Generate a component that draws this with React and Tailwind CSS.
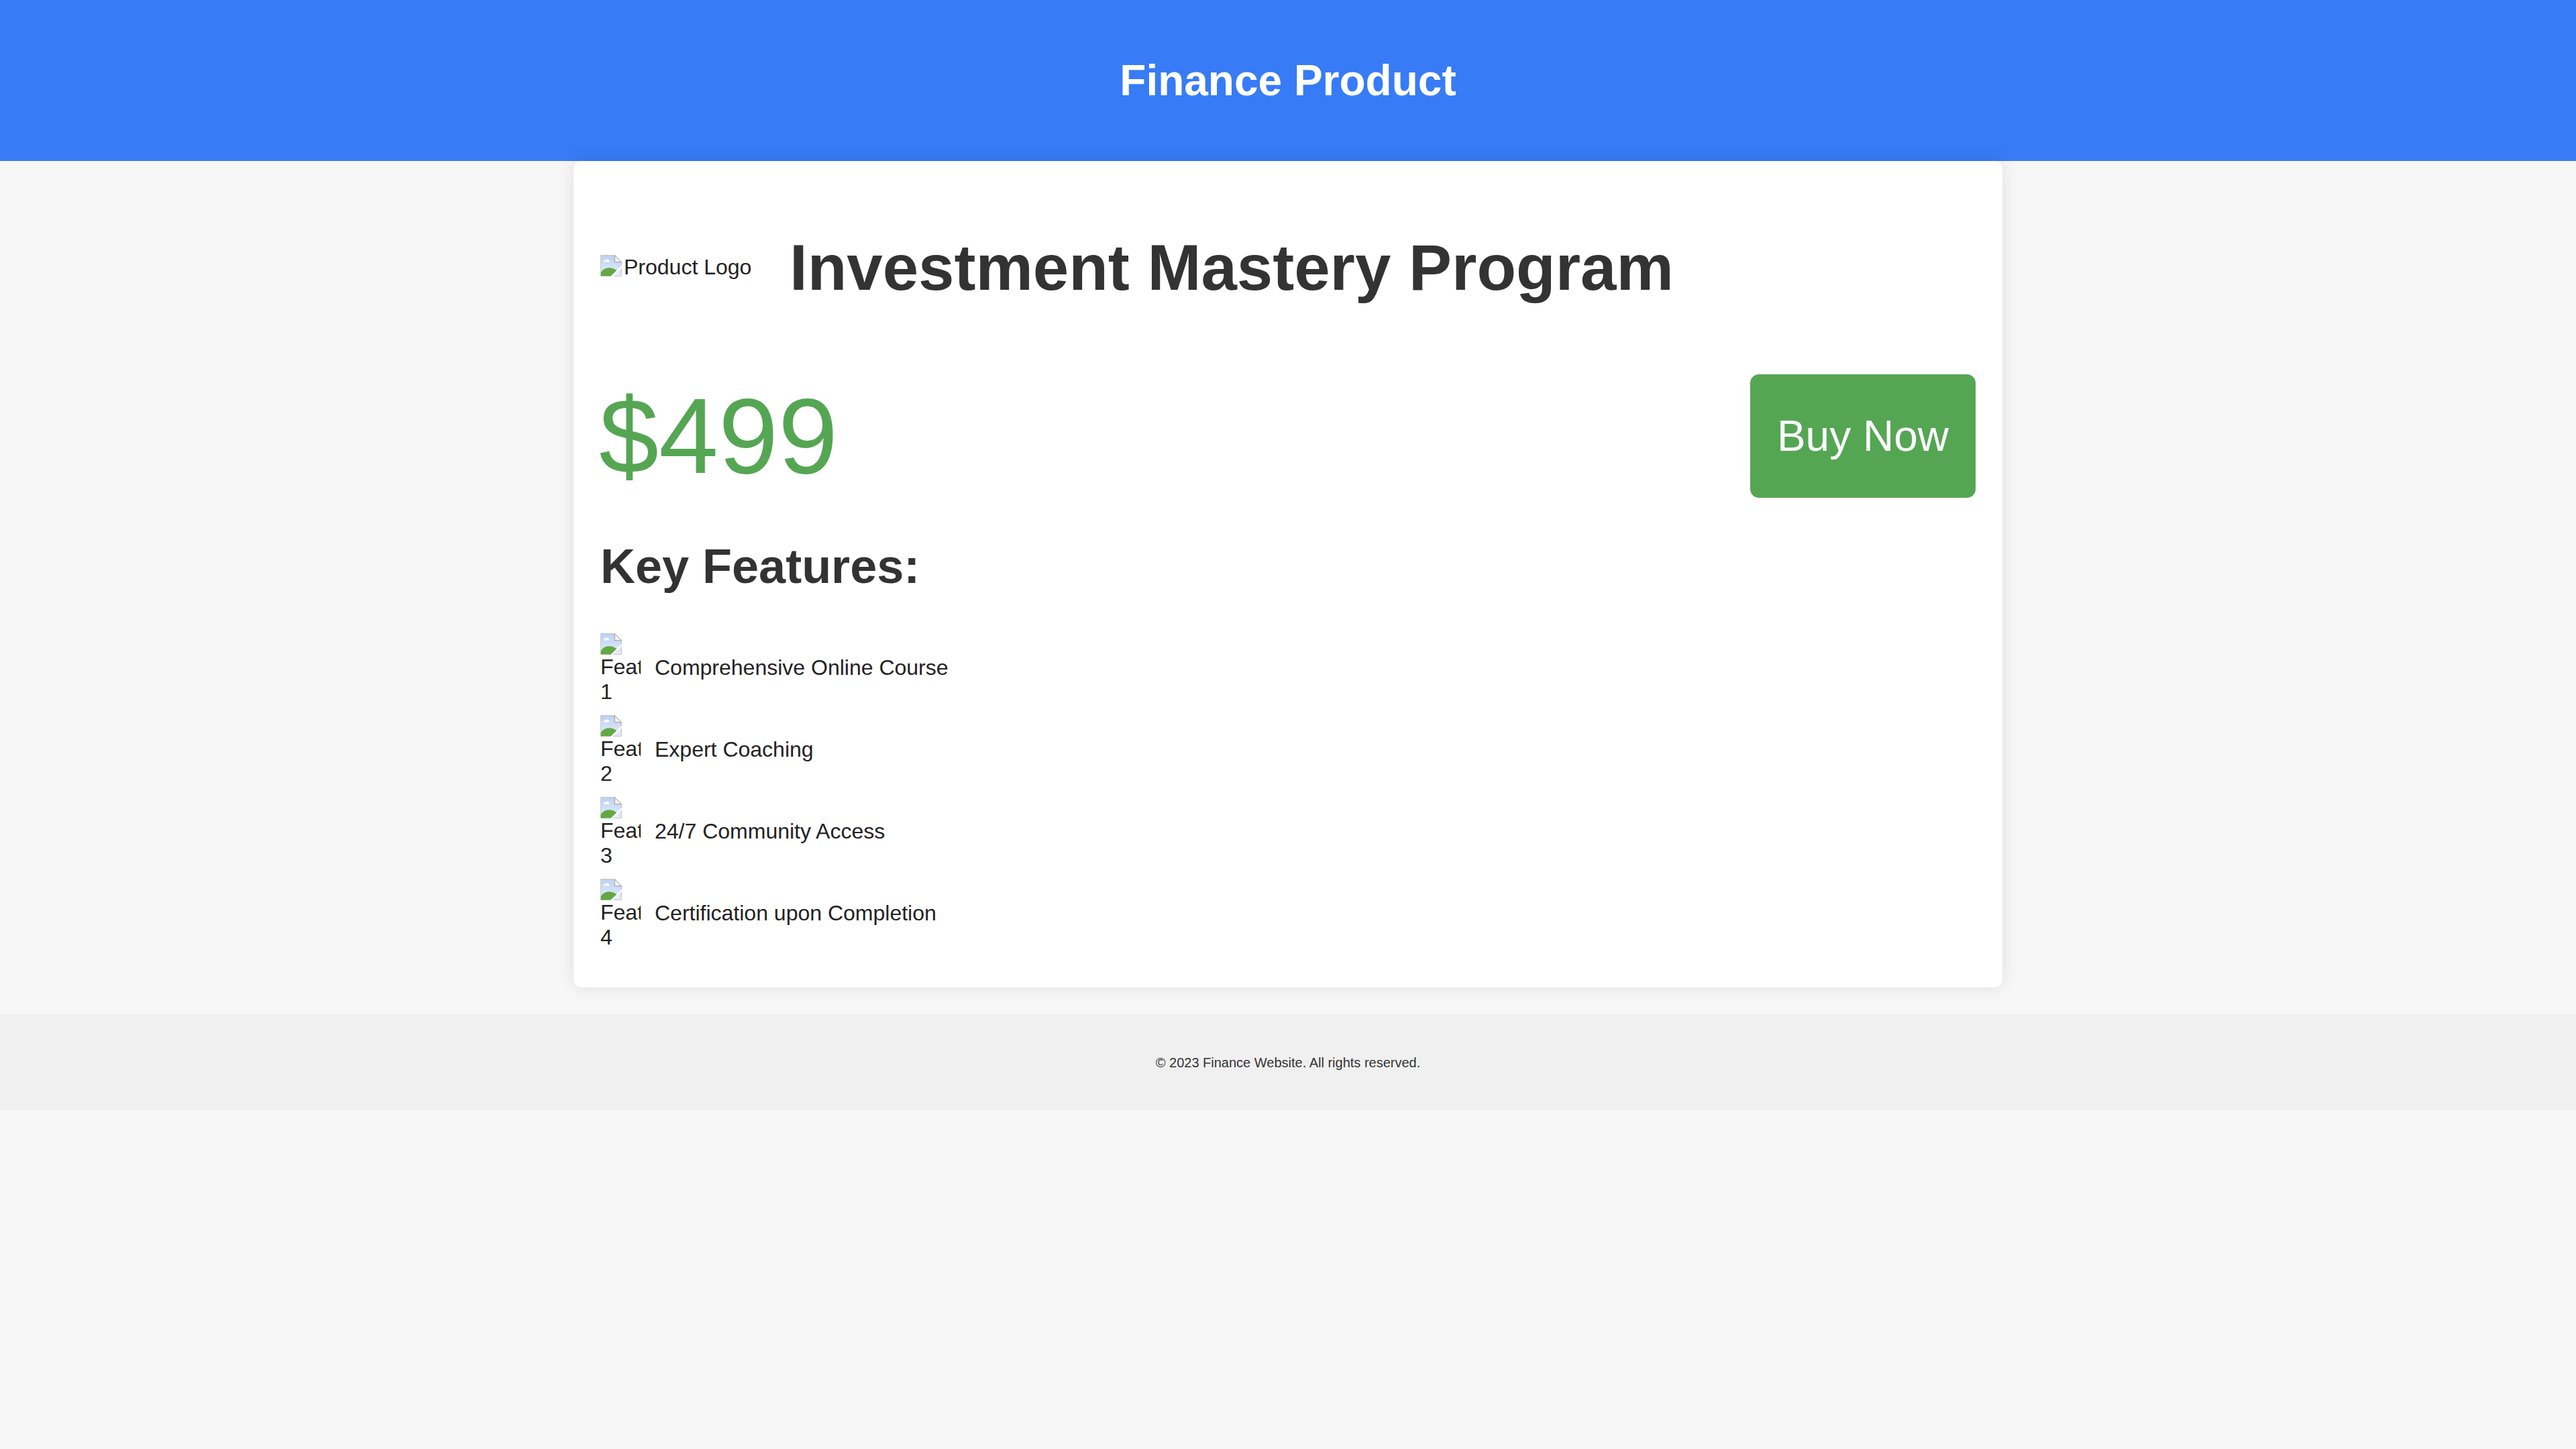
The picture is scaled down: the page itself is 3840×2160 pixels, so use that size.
import React from "react";

const BrokenImage = () => (
  <svg width="32" height="32" viewBox="0 0 16 16" className="block shrink-0">
    <defs>
      <linearGradient id="sky" x1="0" y1="0" x2="0" y2="1">
        <stop offset="0" stopColor="#bcd1f3" />
        <stop offset="1" stopColor="#e6eefb" />
      </linearGradient>
    </defs>
    <path d="M0.3 0.3H10.6L15.7 5.4V15.7H0.3Z" fill="url(#sky)" stroke="#b8b8b8" strokeWidth="0.4" />
    <path d="M10.6 0.3V5.4H15.7Z" fill="#f4f4f4" stroke="#9a9a9a" strokeWidth="0.5" />
    <path d="M2.4 5.2C2.4 4.2 3.2 3.6 4 3.8C4.3 3 5.6 3 5.9 3.9C6.7 3.9 7 4.8 6.5 5.3Z" fill="#fff" />
    <path d="M0.3 15.7V13.2C1.6 10.6 4.4 9.4 7.2 9.6C9.4 9.8 11.2 10.8 12.4 11.8L8.4 15.7Z" fill="#64a844" />
    <path d="M8.2 16.2L16.2 8.6" stroke="#fff" strokeWidth="1.3" />
  </svg>
);

const features = [
  "Comprehensive Online Course",
  "Expert Coaching",
  "24/7 Community Access",
  "Certification upon Completion",
];

export default function App() {
  return (
    <div className="min-h-screen bg-[#f7f7f7] font-['Liberation_Sans',Arial,sans-serif] text-[#333]">
      <header className="h-[240px] bg-[#377bf6] flex items-center justify-center">
        <h1 className="text-[64px] font-bold text-white leading-none">Finance Product</h1>
      </header>

      <main className="w-[2130px] mx-auto bg-white rounded-[13px] shadow-[0_0_27px_rgba(0,0,0,0.1)] p-[40px]">
        <div className="flex items-center mt-[65px]">
          <div className="flex items-start w-[282px] shrink-0">
            <BrokenImage />
            <span className="text-[32px] leading-[37px] text-[#222] ml-[3px]">Product Logo</span>
          </div>
          <h2 className="text-[96px] font-bold leading-[107px] text-[#333]">Investment Mastery Program</h2>
        </div>

        <div className="flex items-center justify-between mt-[106px]">
          <span className="text-[160px] leading-[184px] text-[#55a653] -ml-[2px]">$499</span>
          <button className="h-[184px] px-[40px] bg-[#55a653] rounded-[13px] text-white text-[64px] leading-none">
            Buy Now
          </button>
        </div>

        <h3 className="text-[72px] font-bold leading-[80px] mt-[62px] text-[#333]">Key Features:</h3>

        <ul className="mt-[60px]">
          {features.map((f, i) => (
            <li key={f} className="flex items-center h-[107px] mb-[15px]">
              <div className="w-[60px] h-[107px] overflow-hidden shrink-0 text-[32px] leading-[37px] text-[#222]">
                <BrokenImage />
                <div className="whitespace-nowrap">Feat</div>
                <div>{i + 1}</div>
              </div>
              <span className="ml-[21px] pb-[5px] text-[32px] text-[#222]">{f}</span>
            </li>
          ))}
        </ul>
      </main>

      <footer className="mt-[40px] h-[143px] bg-[#f0f0f0] flex items-center justify-center">
        <p className="text-[20px] text-[#333]">© 2023 Finance Website. All rights reserved.</p>
      </footer>
    </div>
  );
}
